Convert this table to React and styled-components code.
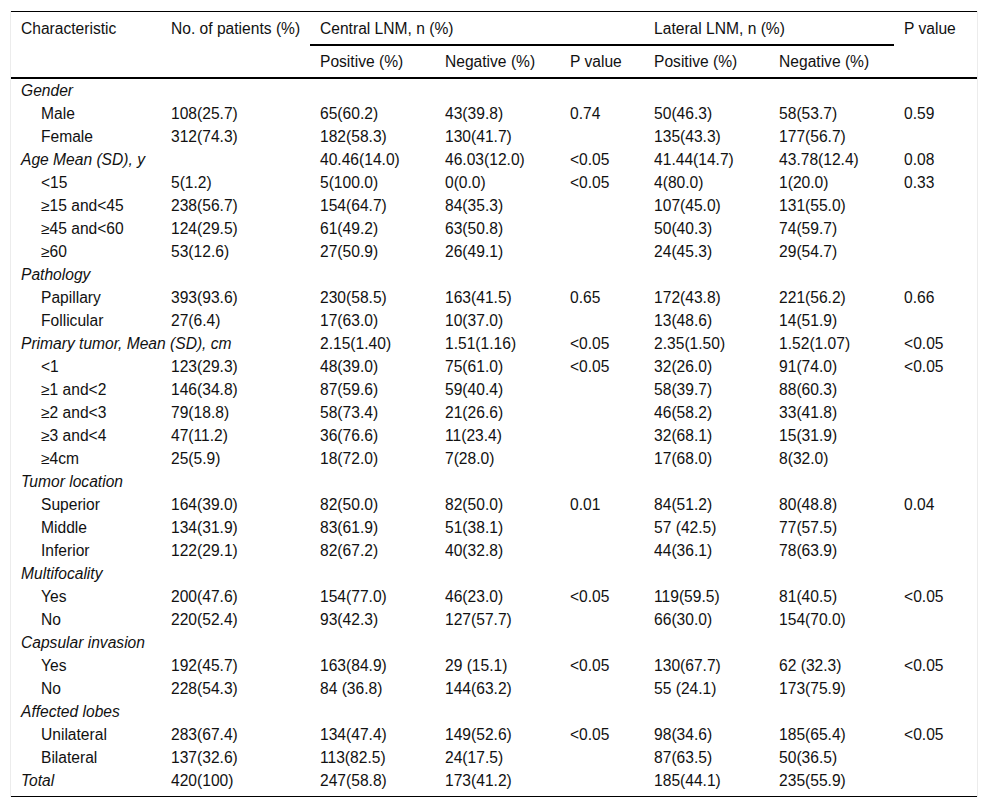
import React from 'react';
import styled, { createGlobalStyle } from 'styled-components';

const GlobalStyle = createGlobalStyle`
  body {
    margin: 0;
    background: #fff;
    font-family: "Liberation Sans", Arial, sans-serif;
    color: #111;
  }
`;

const Wrapper = styled.div`
  margin: 11px 10px 0;
  width: 966px;
  border-left: 1px solid #ececec;
  border-right: 1px solid #ececec;
`;

const Table = styled.table`
  width: 100%;
  table-layout: fixed;
  border-collapse: collapse;
  border-top: 1px solid #000;
  border-bottom: 1px solid #000;
  font-size: 15.6px;
  line-height: 17px;
`;

const HeadCell = styled.th`
  text-align: left;
  font-weight: normal;
  vertical-align: top;
  white-space: nowrap;
  padding: ${(p) => (p.$sub ? '7px 10px 7px' : '8px 10px 7px')};
  border-bottom: ${(p) => (p.$line ? '2px solid #000' : 'none')};
`;

const HeadRow = styled.tr`
  border-bottom: ${(p) => (p.$heavy ? '2px solid #000' : 'none')};
`;

const Cell = styled.td`
  padding: 3px 10px ${(p) => (p.$last ? '7px' : '3px')};
  padding-left: ${(p) => (p.$indent ? '30px' : '10px')};
  font-style: ${(p) => (p.$italic ? 'italic' : 'normal')};
  white-space: nowrap;
  vertical-align: top;
`;

const widths = [150, 149, 125, 125, 84, 125, 125, 83];

const rows = [
  { g: 'Gender' },
  ['Male', '108(25.7)', '65(60.2)', '43(39.8)', '0.74', '50(46.3)', '58(53.7)', '0.59'],
  ['Female', '312(74.3)', '182(58.3)', '130(41.7)', '', '135(43.3)', '177(56.7)', ''],
  { g: 'Age Mean (SD), y', v: ['', '40.46(14.0)', '46.03(12.0)', '<0.05', '41.44(14.7)', '43.78(12.4)', '0.08'] },
  ['˂15', '5(1.2)', '5(100.0)', '0(0.0)', '<0.05', '4(80.0)', '1(20.0)', '0.33'],
  ['≥15 and<45', '238(56.7)', '154(64.7)', '84(35.3)', '', '107(45.0)', '131(55.0)', ''],
  ['≥45 and<60', '124(29.5)', '61(49.2)', '63(50.8)', '', '50(40.3)', '74(59.7)', ''],
  ['≥60', '53(12.6)', '27(50.9)', '26(49.1)', '', '24(45.3)', '29(54.7)', ''],
  { g: 'Pathology' },
  ['Papillary', '393(93.6)', '230(58.5)', '163(41.5)', '0.65', '172(43.8)', '221(56.2)', '0.66'],
  ['Follicular', '27(6.4)', '17(63.0)', '10(37.0)', '', '13(48.6)', '14(51.9)', ''],
  { g: 'Primary tumor, Mean (SD), cm', v: ['', '2.15(1.40)', '1.51(1.16)', '<0.05', '2.35(1.50)', '1.52(1.07)', '<0.05'] },
  ['<1', '123(29.3)', '48(39.0)', '75(61.0)', '<0.05', '32(26.0)', '91(74.0)', '<0.05'],
  ['≥1 and<2', '146(34.8)', '87(59.6)', '59(40.4)', '', '58(39.7)', '88(60.3)', ''],
  ['≥2 and<3', '79(18.8)', '58(73.4)', '21(26.6)', '', '46(58.2)', '33(41.8)', ''],
  ['≥3 and<4', '47(11.2)', '36(76.6)', '11(23.4)', '', '32(68.1)', '15(31.9)', ''],
  ['≥4cm', '25(5.9)', '18(72.0)', '7(28.0)', '', '17(68.0)', '8(32.0)', ''],
  { g: 'Tumor location' },
  ['Superior', '164(39.0)', '82(50.0)', '82(50.0)', '0.01', '84(51.2)', '80(48.8)', '0.04'],
  ['Middle', '134(31.9)', '83(61.9)', '51(38.1)', '', '57 (42.5)', '77(57.5)', ''],
  ['Inferior', '122(29.1)', '82(67.2)', '40(32.8)', '', '44(36.1)', '78(63.9)', ''],
  { g: 'Multifocality' },
  ['Yes', '200(47.6)', '154(77.0)', '46(23.0)', '<0.05', '119(59.5)', '81(40.5)', '<0.05'],
  ['No', '220(52.4)', '93(42.3)', '127(57.7)', '', '66(30.0)', '154(70.0)', ''],
  { g: 'Capsular invasion' },
  ['Yes', '192(45.7)', '163(84.9)', '29 (15.1)', '<0.05', '130(67.7)', '62 (32.3)', '<0.05'],
  ['No', '228(54.3)', '84 (36.8)', '144(63.2)', '', '55 (24.1)', '173(75.9)', ''],
  { g: 'Affected lobes' },
  ['Unilateral', '283(67.4)', '134(47.4)', '149(52.6)', '<0.05', '98(34.6)', '185(65.4)', '<0.05'],
  ['Bilateral', '137(32.6)', '113(82.5)', '24(17.5)', '', '87(63.5)', '50(36.5)', ''],
  { g: 'Total', v: ['420(100)', '247(58.8)', '173(41.2)', '', '185(44.1)', '235(55.9)', ''] },
];

const App = () => (
  <>
    <GlobalStyle />
    <Wrapper>
      <Table>
        <colgroup>
          {widths.map((w, i) => (
            <col key={i} style={{ width: w }} />
          ))}
        </colgroup>
        <thead>
          <tr>
            <HeadCell rowSpan={2}>Characteristic</HeadCell>
            <HeadCell rowSpan={2}>No. of patients (%)</HeadCell>
            <HeadCell colSpan={3} $line>Central LNM, n (%)</HeadCell>
            <HeadCell colSpan={2} $line>Lateral LNM, n (%)</HeadCell>
            <HeadCell rowSpan={2}>P value</HeadCell>
          </tr>
          <HeadRow $heavy>
            <HeadCell $sub>Positive (%)</HeadCell>
            <HeadCell $sub>Negative (%)</HeadCell>
            <HeadCell $sub>P value</HeadCell>
            <HeadCell $sub>Positive (%)</HeadCell>
            <HeadCell $sub>Negative (%)</HeadCell>
          </HeadRow>
        </thead>
        <tbody>
          {rows.map((r, i) => {
            const last = i === rows.length - 1;
            if (r.g) {
              const vals = r.v || ['', '', '', '', '', '', ''];
              return (
                <tr key={i}>
                  <Cell $italic $last={last}>{r.g}</Cell>
                  {vals.map((v, j) => (
                    <Cell key={j} $last={last}>{v}</Cell>
                  ))}
                </tr>
              );
            }
            return (
              <tr key={i}>
                {r.map((v, j) => (
                  <Cell key={j} $indent={j === 0} $last={last}>{v}</Cell>
                ))}
              </tr>
            );
          })}
        </tbody>
      </Table>
    </Wrapper>
  </>
);

export default App;
